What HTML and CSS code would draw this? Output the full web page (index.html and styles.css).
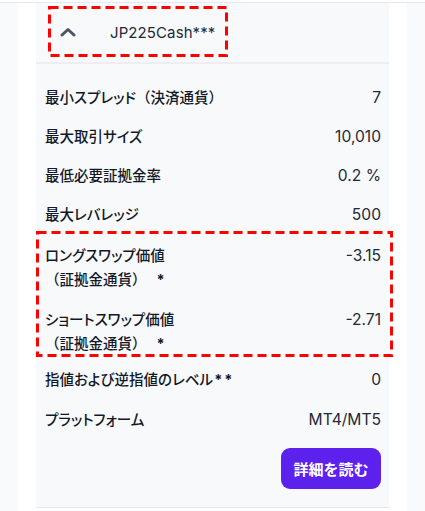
FILE: index.html
```html
<!DOCTYPE html>
<html lang="ja">
<head>
<meta charset="utf-8">
<link rel="stylesheet" href="styles.css">
</head>
<body>
<div class="page">
  <div class="panel">
    <div class="card">
      <div class="head">
        <svg class="chev" width="16" height="10" viewBox="0 0 16 10"><path d="M2 8 L8 2.5 L14 8" fill="none" stroke="#4b5563" stroke-width="3" stroke-linecap="round" stroke-linejoin="round"/></svg>
        <span class="sym">JP225Cash***</span>
      </div>
      <div class="body">
        <div class="row"><span class="lab">最小スプレッド<span class="par">（決済通貨）</span></span><span class="val">7</span></div>
        <div class="row"><span class="lab">最大取引サイズ</span><span class="val">10,010</span></div>
        <div class="row"><span class="lab">最低必要証拠金率</span><span class="val">0.2 %</span></div>
        <div class="row"><span class="lab">最大レバレッジ</span><span class="val">500</span></div>
        <div class="row two r5"><span class="lab">ロングスワップ価値<br><span class="par">（証拠金通貨）</span><span class="star">*</span></span><span class="val">-3.15</span></div>
        <div class="row two r6"><span class="lab">ショートスワップ価値<br><span class="par">（証拠金通貨）</span><span class="star">*</span></span><span class="val">-2.71</span></div>
        <div class="row r7"><span class="lab">指値および逆指値のレベル<span class="stars">**</span></span><span class="val">0</span></div>
        <div class="row"><span class="lab">プラットフォーム</span><span class="val">MT4/MT5</span></div>
        <div class="actions"><span class="btn">詳細を読む</span></div>
      </div>
      <svg class="mark mark1" width="180" height="51" viewBox="0 0 180 51"><rect x="1.5" y="1.5" width="177" height="48" fill="none" stroke="#ff0000" stroke-width="3" stroke-dasharray="9 5"/></svg>
      <svg class="mark mark2" width="357" height="126" viewBox="0 0 357 126"><rect x="1.5" y="1.5" width="354" height="123" fill="none" stroke="#ff0000" stroke-width="3" stroke-dasharray="9 5"/></svg>
    </div>
  </div>
</div>
</body>
</html>
```
FILE: styles.css
```css
* { box-sizing: border-box; }
html, body { margin: 0; padding: 0; }
body {
  width: 425px;
  height: 511px;
  overflow: hidden;
  background: #ffffff;
  font-family: Inter, "Noto Sans CJK JP", sans-serif;
  color: #111827;
}
.page {
  margin-top: 2px;
  border-top: 1px solid #e7e8ee;
  background: #f9fafb;
  height: 509px;
  padding: 0 18px;
}
.panel {
  background: #ffffff;
  height: 100%;
  padding: 0 18px;
}
.card {
  position: relative;
  background: #f8f9fb;
  height: 505px;
  border-bottom: 1px solid #e5e7eb;
}
.head {
  height: 61px;
  border-bottom: 2px solid #eceef2;
  display: flex;
  align-items: center;
  padding-left: 24px;
  padding-bottom: 1px;
}
.chev { display: block; margin-right: 34px; }
.sym {
  font-size: 15px;
  color: #1f2937;
  letter-spacing: 0.1px;
}
.body {
  padding: 14px 8px 0 9px;
}
.row {
  display: flex;
  justify-content: space-between;
  align-items: center;
  height: 39px;
  font-size: 14.5px;
}
.row.two {
  align-items: flex-start;
  height: 64px;
  padding-top: 9.5px;
}
.row.r6 { height: 62px; }
.row.r7 { height: 40px; }
.lab {
  display: block;
  line-height: 24px;
  font-weight: 500;
  color: #111827;
  font-feature-settings: "palt";
}
.par { font-feature-settings: normal; }
.star { font-weight: 700; margin-left: 10px; }
.stars { font-weight: 700; letter-spacing: 2px; margin-left: 1px; }
.val {
  display: block;
  line-height: 24px;
  font-size: 15.6px;
  color: #1f2937;
}
.actions {
  display: flex;
  justify-content: flex-end;
  padding-top: 9px;
}
.btn {
  display: inline-flex;
  align-items: center;
  justify-content: center;
  width: 100px;
  height: 41px;
  background: #5d21ee;
  color: #ffffff;
  border-radius: 9px;
  font-size: 15px;
  font-weight: 700;
}
.mark { position: absolute; display: block; }
.mark1 { left: 12px; top: 3px; }
.mark2 { left: 0; top: 228px; }
```
